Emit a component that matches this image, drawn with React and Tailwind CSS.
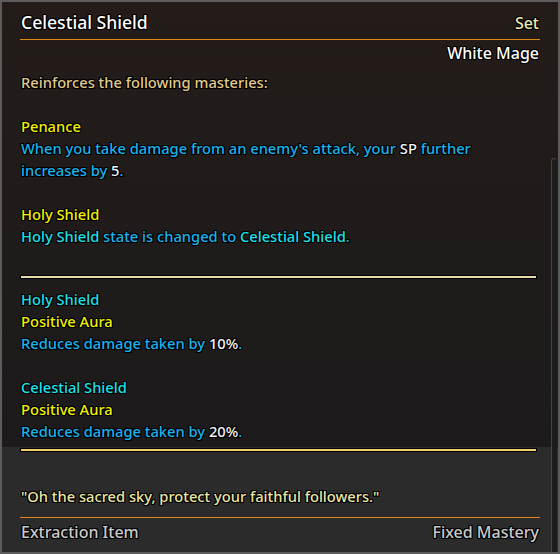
import React from "react";

const sh = "[text-shadow:1px_1px_0_#000,-1px_-1px_0_#000,1px_-1px_0_#000,-1px_1px_0_#000,0_1px_0_#000,0_-1px_0_#000,1px_0_0_#000,-1px_0_0_#000]";

function Line({ children, className = "" }) {
  return <div className={`h-[22px] leading-[22px] whitespace-nowrap ${className}`}>{children}</div>;
}

const Y = "text-[#f2f200]";
const B = "text-[#18b4ee]";
const C = "text-[#1ee0ea]";
const W = "text-[#f4f4f4]";

function Sep({ color }) {
  return (
    <div className="h-[4px] bg-black p-[1px] -ml-[1px] mr-[2px]">
      <div className={`h-[2px] ${color}`} />
    </div>
  );
}

export default function App() {
  return (
    <div className="w-[560px] h-[554px] bg-[#3a3a3a] font-['Noto_Sans',sans-serif] text-[14.7px] font-medium">
      <div className={`relative w-[560px] h-[554px] border-2 border-[#5c5c5c] flex flex-col overflow-hidden ${sh}`}>
        <div className="bg-gradient-to-b from-[#231c19] to-[#1c1a1b] px-[19px] flex flex-col h-[445px]">
          <div className="flex items-baseline justify-between pt-[7px] h-[38px] border-b border-[#e0881c] -mx-[1px] px-[1px]">
            <span className="text-[17.6px] leading-[26px] text-white">Celestial Shield</span>
            <span className="text-[16px] text-[#ece8b0]">Set</span>
          </div>
          <div className="text-right text-white text-[16px] leading-[22px] h-[22px] mt-[2px]">White Mage</div>
          <div className="mt-[7px]">
            <Line className="text-[#e2ca8c]">Reinforces the following masteries:</Line>
            <Line />
            <Line className={Y}>Penance</Line>
            <Line className={B}>
              When you take damage from an enemy's attack, your <span className={W}>SP</span> further
            </Line>
            <Line className={B}>
              increases by <span className={W}>5</span>.
            </Line>
            <Line />
            <Line className={Y}>Holy Shield</Line>
            <Line className={B}>
              <span className={C}>Holy Shield</span> state is changed to <span className={C}>Celestial Shield</span>.
            </Line>
          </div>
          <div className="mt-[28px]">
            <Sep color="bg-[#eadcaa]" />
          </div>
          <div className="mt-[9px]">
            <Line className={C}>Holy Shield</Line>
            <Line className={Y}>Positive Aura</Line>
            <Line className={B}>
              Reduces damage taken by <span className={W}>10%</span>.
            </Line>
            <Line />
            <Line className={C}>Celestial Shield</Line>
            <Line className={Y}>Positive Aura</Line>
            <Line className={B}>
              Reduces damage taken by <span className={W}>20%</span>.
            </Line>
          </div>
        </div>
        <div className="flex-1 bg-[#2b2b2b] px-[19px] flex flex-col">
          <div className="mt-[1px]">
            <Sep color="bg-[#f0cc6c]" />
          </div>
          <div className="mt-[33px] h-[22px] leading-[22px] text-[#ece6a2]">
            "Oh the sacred sky, protect your faithful followers."
          </div>
          <div className="mt-[10px] h-[1px] bg-[#e0881c] -mx-[1px]" />
          <div className="mt-[2px] flex justify-between h-[24px] leading-[24px] text-[16px] text-[#cacaca]">
            <span>Extraction Item</span>
            <span>Fixed Mastery</span>
          </div>
        </div>
        <div className="absolute right-[1px] top-[156px] bottom-0 w-[6px] rounded-t-[4px] bg-[#1c1c1c] border-l border-t border-[#454545]" />
      </div>
    </div>
  );
}
